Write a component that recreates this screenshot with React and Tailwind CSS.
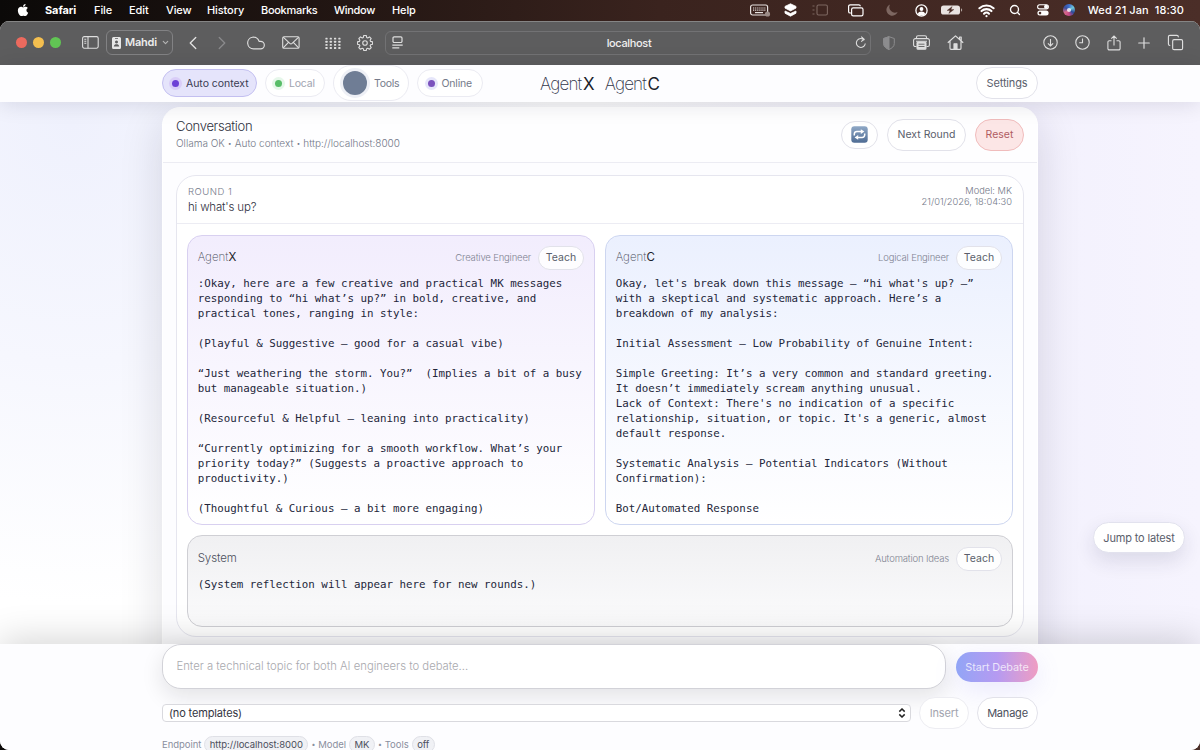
import React, { useState } from "react";
import { FaApple } from "react-icons/fa";
import {
  ChevronDown,
  ChevronLeft,
  ChevronRight,
  Cloud,
  Copy,
  Plus,
  Search,
  Wifi,
} from "lucide-react";

const agentXText = `:Okay, here are a few creative and practical MK messages
responding to “hi what’s up?” in bold, creative, and
practical tones, ranging in style:

(Playful & Suggestive – good for a casual vibe)

“Just weathering the storm. You?”  (Implies a bit of a busy
but manageable situation.)

(Resourceful & Helpful – leaning into practicality)

“Currently optimizing for a smooth workflow. What’s your
priority today?” (Suggests a proactive approach to
productivity.)

(Thoughtful & Curious – a bit more engaging)`;

const agentCText = `Okay, let's break down this message – “hi what's up? –”
with a skeptical and systematic approach. Here’s a
breakdown of my analysis:

Initial Assessment – Low Probability of Genuine Intent:

Simple Greeting: It’s a very common and standard greeting.
It doesn’t immediately scream anything unusual.
Lack of Context: There's no indication of a specific
relationship, situation, or topic. It's a generic, almost
default response.

Systematic Analysis – Potential Indicators (Without
Confirmation):

Bot/Automated Response`;

const MenuBar = () => (
  <div className="flex h-[21px] shrink-0 items-center pb-px text-[11px] font-medium tracking-[-0.1px] text-white">
    <FaApple className="ml-[16px] h-[14px] w-[14px]" />
    <span className="ml-[15px] w-[49px] font-bold">Safari</span>
    <span className="w-[35px]">File</span>
    <span className="w-[37px]">Edit</span>
    <span className="w-[41px]">View</span>
    <span className="w-[54px]">History</span>
    <span className="w-[73px] tracking-[-0.3px]">Bookmarks</span>
    <span className="w-[58px] tracking-[-0.3px]">Window</span>
    <span>Help</span>
    <div className="ml-auto flex items-center pr-4">
      {/* keyboard */}
      <svg className="h-[14px] w-[21px]" viewBox="0 0 21 14" fill="none" stroke="#e8e2e0">
        <rect x="0.6" y="2" width="17" height="10" rx="2" strokeWidth="1.2" />
        <path d="M3 5h13M3 7.2h13" strokeWidth="1.2" strokeDasharray="1.2 0.9" />
        <path d="M5 9.6h8" strokeWidth="1.2" />
        <circle cx="17.5" cy="11" r="2.6" fill="#9b8b86" stroke="none" />
      </svg>
      {/* stacked layers */}
      <svg className="ml-[13px] h-[14px] w-[13px]" viewBox="0 0 13 14" fill="#fff" stroke="#fff" strokeWidth="0.8" strokeLinejoin="round">
        <path d="M6.5 0.8 12 3.4v1.7L6.5 7.9 1 5.1V3.4z" />
        <path d="M1 8 6.5 10.5 12 8v2.2L6.5 13.2 1 10.2z" />
      </svg>
      <svg className="ml-[15px] h-[12px] w-[16px]" viewBox="0 0 16 12" fill="none" stroke="#7d6761" strokeWidth="1.1">
        <rect x="5" y="1" width="10.4" height="10" rx="1.5" />
        <path d="M0.5 2h2M0.5 6h2M0.5 10h2" />
      </svg>
      <svg className="ml-[20px] h-[13px] w-[16px]" viewBox="0 0 16 13" fill="none" stroke="#fff" strokeWidth="1.2">
        <path d="M3 9H2.2A1.6 1.6 0 0 1 .6 7.4V2.4A1.6 1.6 0 0 1 2.2.8h8.6a1.6 1.6 0 0 1 1.6 1.4" />
        <rect x="3.6" y="3.8" width="11.4" height="8" rx="1.6" />
      </svg>
      <svg className="ml-[22px] h-[12px] w-[12px]" viewBox="0 0 12 12" fill="#7d6761">
        <path d="M4 0.5A5.8 5.8 0 1 0 11.6 8 5.6 5.6 0 0 1 4 .5z" />
      </svg>
      <svg className="ml-[17px] h-[13px] w-[13px]" viewBox="0 0 13 13" fill="none" stroke="#fff" strokeWidth="1.3">
        <circle cx="6.5" cy="6.5" r="5.6" />
        <circle cx="6.5" cy="5" r="1.9" fill="#fff" stroke="none" />
        <path d="M2.8 10c.6-2 2-2.6 3.7-2.6s3.1.6 3.7 2.6c-2 2-5.4 2-7.4 0z" fill="#fff" stroke="none" />
      </svg>
      <svg className="ml-[13px] h-[10px] w-[22px]" viewBox="0 0 22 10">
        <rect x="0" y="0.5" width="19" height="9" rx="2.6" fill="#e9e3e1" />
        <path d="M20 3.3c1.6.4 1.6 3 0 3.4z" fill="#b5a8a4" />
        <path d="M11.2 1.4 6 5.5h3L7.8 8.6 13 4.5h-3z" fill="#4a2d27" stroke="#4a2d27" strokeWidth=".3" />
      </svg>
      <Wifi className="ml-[15px] h-[17px] w-[17px]" strokeWidth={3} />
      <Search className="ml-[14px] h-[12px] w-[12px]" strokeWidth={2.6} />
      <svg className="ml-[16px] h-[12px] w-[12px]" viewBox="0 0 12 12" fill="none" stroke="#fff">
        <rect x="0.6" y="0.7" width="10.8" height="4.2" rx="2.1" strokeWidth="1.1" />
        <circle cx="9" cy="2.8" r="2" fill="#fff" stroke="none" />
        <rect x="0.4" y="6.6" width="11.2" height="5" rx="2.5" fill="#fff" stroke="none" />
        <circle cx="3" cy="9.1" r="1.3" fill="#4a2d27" stroke="none" />
      </svg>
      <div className="ml-[14px] h-[12px] w-[12px] rounded-full bg-[conic-gradient(from_0deg,#3b6fd0,#6fc7d8,#2a4a9a,#c84a86,#d66a8a,#3a4f9c,#3b6fd0)]">
        <div className="mx-auto h-full w-full scale-[0.35] rounded-full bg-white/80" />
      </div>
      <span className="ml-[13px] tracking-[0.08px] whitespace-pre">Wed 21 Jan  18:30</span>
    </div>
  </div>
);

const SafariToolbar = () => (
  <div className="flex h-[44px] shrink-0 items-center border-t border-[#858585] bg-[#5d5d5e] pb-[2px] text-[#dedede]">
    <div className="ml-[16px] flex gap-[6px]">
      <span className="h-[11px] w-[11px] rounded-full bg-[#ec6a5e]" />
      <span className="h-[11px] w-[11px] rounded-full bg-[#f4bf4f]" />
      <span className="h-[11px] w-[11px] rounded-full bg-[#61c554]" />
    </div>
    {/* sidebar toggle */}
    <svg className="ml-[21px] h-[13px] w-[17px]" viewBox="0 0 17 13" fill="none" stroke="#dedede" strokeWidth="1.1">
      <rect x="0.6" y="0.6" width="15.6" height="11.6" rx="1.6" />
      <path d="M6 .6v11.6M2.3 3.2h2M2.3 5.2h2M2.3 7.2h2" />
    </svg>
    <div className="ml-[7px] flex h-[25px] w-[67px] items-center rounded-[6px] border border-[#828284] pl-[5px] text-[11px] font-semibold">
      <svg className="h-[12px] w-[9px]" viewBox="0 0 9 12" fill="#e6e6e6">
        <path
          fillRule="evenodd"
          d="M1.5 0h6A1.5 1.5 0 0 1 9 1.5v9A1.5 1.5 0 0 1 7.5 12h-6A1.5 1.5 0 0 1 0 10.5v-9A1.5 1.5 0 0 1 1.5 0zM3 1.2v.8h3v-.8zM4.5 3.6a1.5 1.5 0 1 0 .01 0zM1.8 9.6h5.4C7 7.8 6 7.2 4.5 7.2S2 7.8 1.8 9.6z"
        />
      </svg>
      <span className="ml-[4px] tracking-[-0.2px] text-[#ececec]">Mahdi</span>
      <ChevronDown className="ml-[4px] h-[9px] w-[9px] text-[#b5b5b5]" strokeWidth={3} />
    </div>
    <ChevronLeft className="ml-[9px] h-[22px] w-[22px]" strokeWidth={1.5} />
    <ChevronRight className="ml-[7px] h-[22px] w-[22px] text-[#88888a]" strokeWidth={1.5} />
    <Cloud className="ml-[13px] h-[20px] w-[20px]" strokeWidth={1.4} />
    {/* mail */}
    <svg className="ml-[16px] h-[13px] w-[18px]" viewBox="0 0 18 13" fill="none" stroke="#dedede" strokeWidth="1.1">
      <rect x="0.7" y="0.7" width="16.4" height="11.6" rx="1.4" />
      <path d="m1.2 1.2 6.6 6.2c.7.6 1.6.6 2.3 0l6.6-6.2M1.2 11.8l5-5.2M16.6 11.8l-5-5.2" />
    </svg>
    {/* start page dots */}
    <svg className="ml-[25px] h-[12px] w-[16px]" viewBox="0 0 16 12" fill="#dedede">
      {[0.7, 3.8, 6.9, 10].map((y) =>
        [0.4, 4.7, 9, 13.3].map((x) => (
          <rect key={`${x}-${y}`} x={x} y={y} width="2.2" height="1.9" rx="0.5" />
        ))
      )}
    </svg>
    {/* gear */}
    <svg className="ml-[16px] h-[16px] w-[16px]" viewBox="0 0 24 24" fill="none" stroke="#dedede" strokeWidth="1.7">
      <path
        d="M10.2 1.5h3.6l.7 3 1.6.7 2.7-1.6 2.5 2.5-1.6 2.7.7 1.6 3 .7v3.6l-3 .7-.7 1.6 1.6 2.7-2.5 2.5-2.7-1.6-1.6.7-.7 3h-3.6l-.7-3-1.6-.7-2.7 1.6-2.5-2.5 1.6-2.7-.7-1.6-3-.7v-3.6l3-.7.7-1.6-1.6-2.7 2.5-2.5 2.7 1.6 1.6-.7z"
        strokeLinejoin="round"
        transform="translate(0 -.8)"
      />
      <circle cx="12" cy="12" r="3.4" />
    </svg>
    <div className="ml-[12px] flex h-[24px] w-[486px] items-center rounded-[6px] border border-[#727274] pr-[3px] pl-[6px]">
      <svg className="h-[13px] w-[11px]" viewBox="0 0 11 13" fill="none" stroke="#dedede" strokeWidth="1.2">
        <rect x="1" y="0.9" width="9" height="5.6" rx="1.2" />
        <path d="M0.3 9.2h10.4M0.3 11.8h7" />
      </svg>
      <span className="flex-1 pt-px text-center text-[11px] font-medium tracking-[-0.35px] text-[#f0f0f0]">
        localhost
      </span>
      <svg className="h-[13px] w-[12px]" viewBox="0 0 12 13" fill="none" stroke="#dedede" strokeWidth="1.1">
        <path d="M9.4 4.2A4.5 4.5 0 1 0 10.3 7.5M6.2 0.6l2.9 2.6-2.9 2.4" />
      </svg>
    </div>
    <svg className="ml-[12px] h-[14px] w-[12px]" viewBox="0 0 12 14" fill="none" stroke="#8c8c8e" strokeWidth="1">
      <path d="M6 .7 11.3 2.5v5c0 3-2.5 4.8-5.3 6C3.2 12.3.7 10.5.7 7.5v-5z" />
      <path d="M6 .7v12.8C3.2 12.3.7 10.5.7 7.5v-5z" fill="#8c8c8e" />
    </svg>
    {/* printer */}
    <svg className="ml-[18px] h-[15px] w-[17px]" viewBox="0 0 17 15" fill="none" stroke="#dedede" strokeWidth="1.1">
      <path d="M3.5 3.6V2.2A1.5 1.5 0 0 1 5 .7h7a1.5 1.5 0 0 1 1.5 1.5v1.4M3.5 11.5H2.2A1.6 1.6 0 0 1 .6 9.9V5.3a1.7 1.7 0 0 1 1.7-1.7h12.4a1.7 1.7 0 0 1 1.7 1.7v4.6a1.6 1.6 0 0 1-1.6 1.6h-1.3" />
      <path d="M3 6.2h11" />
      <rect x="4" y="7" width="9" height="7.2" rx="1" fill="#dedede" />
      <path d="M5.5 9.2h6M5.5 11.5h6" stroke="#5d5d5e" strokeWidth=".9" />
    </svg>
    {/* home */}
    <svg className="ml-[17px] h-[15px] w-[17px]" viewBox="0 0 17 15" fill="none" stroke="#dedede" strokeWidth="1.2" strokeLinejoin="round">
      <path d="M0.8 7.7 8.5.9l7.7 6.8M3 6.2v7.1a1 1 0 0 0 1 1h9a1 1 0 0 0 1-1V6.2M12.6 4V2h1.6v3.4" />
      <rect x="7" y="8.8" width="3" height="5.4" fill="#dedede" />
    </svg>
    <svg className="ml-[79px] h-[15px] w-[15px]" viewBox="0 0 15 15" fill="none" stroke="#dedede" strokeWidth="1.1">
      <circle cx="7.5" cy="7.5" r="6.7" />
      <path d="M7.5 4v6.8M4.9 8.3l2.6 2.6 2.6-2.6" />
    </svg>
    <svg className="ml-[17px] h-[15px] w-[15px]" viewBox="0 0 15 15" fill="none" stroke="#dedede" strokeWidth="1.1">
      <circle cx="7.5" cy="7.5" r="6.7" />
      <path d="M7.5 3.5v4.3H4.2" />
    </svg>
    {/* share */}
    <svg className="ml-[17px] h-[16px] w-[14px]" viewBox="0 0 14 16" fill="none" stroke="#dedede" strokeWidth="1.1">
      <path d="M4.5 5.7H2.3A1.4 1.4 0 0 0 .9 7.1v6.4a1.4 1.4 0 0 0 1.4 1.4h9.4a1.4 1.4 0 0 0 1.4-1.4V7.1a1.4 1.4 0 0 0-1.4-1.4H9.5M7 10.5V1.2M4.3 3.7 7 1l2.7 2.7" />
    </svg>
    <Plus className="ml-[14px] h-[18px] w-[18px]" strokeWidth={1.6} />
    <Copy className="ml-[14px] h-[17px] w-[17px]" strokeWidth={1.6} />
  </div>
);

const AgentName = ({ letter, className = "" }) => (
  <span className="font-extralight">
    Agent<span className={`font-normal text-[#1c1f2b] ${className}`}>{letter}</span>
  </span>
);

const Dot = () => <span className="relative -top-px mx-[3px] text-[7px]">•</span>;

const TeachButton = () => (
  <button className="h-[24px] w-[46px] rounded-full border border-[#e2e2ea] bg-white/90 pt-px text-[10.5px] text-[#5a5e6b]">
    Teach
  </button>
);

const AgentCard = ({ title, role, text, className }) => (
  <div className={`rounded-[15px] border pt-[9px] pr-[10px] pl-[9.7px] ${className}`}>
    <div className="flex h-[25px] items-center">
      <span className="pt-px text-[11.5px] text-[#4b4f5c]">{title}</span>
      <span className="mr-[7px] ml-auto pt-px text-[9.5px] font-light tracking-[-0.17px] text-[#7f8392]">{role}</span>
      <TeachButton />
    </div>
    <pre className="mt-[6px] font-['DejaVu_Sans_Mono',monospace] text-[10.82px] leading-[15px] text-[#23263a]">
      {text}
    </pre>
  </div>
);

const Chip = ({ children }) => (
  <span className="mx-[3px] rounded-full border border-[#dfe0e6] bg-[#f0f1f5] px-[4.5px] py-px text-[#4b4f5c]">
    {children}
  </span>
);

const App = () => {
  const [topic, setTopic] = useState("");

  return (
    <div className="flex h-[750px] w-[1200px] flex-col overflow-hidden bg-linear-to-r from-[#0b0908] via-[#3a231e] via-55% to-[#4b2e28] font-['Inter',sans-serif]">
      <MenuBar />
      <div className="relative flex flex-1 flex-col overflow-hidden rounded-[9px] bg-white">
        <SafariToolbar />

        {/* app top bar */}
        <header className="relative z-10 flex h-[37px] shrink-0 justify-center bg-[#fdfdff] shadow-[0_2px_22px_rgba(15,15,40,0.12)]">
          <div className="flex h-[36px] w-[876px] items-center text-[10.5px] text-[#757a8a]">
            <div className="flex h-[28px] w-[95px] items-center rounded-full border border-[#c3bff0] bg-[#e5e4fb] pt-px pl-[9px] tracking-[-0.05px] text-[#3a3b52]">
              <span className="mr-[7px] mb-px h-[7px] w-[7px] rounded-full bg-[#6d3fd6] shadow-[0_0_0_3px_#d9cdf8]" />
              Auto context
            </div>
            <div className="ml-[8px] flex h-[28px] w-[60px] items-center rounded-full border border-[#ebebf2] bg-white pt-px pl-[9px] tracking-[-0.2px] text-[#a0a4b0]">
              <span className="mr-[7px] mb-px h-[7px] w-[7px] rounded-full bg-[#58bd68] shadow-[0_0_0_3px_#e6f7ea]" />
              Local
            </div>
            <div className="ml-[8px] flex h-[36px] w-[76px] items-center rounded-full border border-[#ebebf2] bg-white pt-px pl-[9px] tracking-[-0.3px]">
              <span className="mr-[7px] mb-px h-[24px] w-[24px] rounded-full bg-[#6f7d95] shadow-[0_0_0_3px_#eef0f6]" />
              Tools
            </div>
            <div className="ml-[8px] flex h-[28px] w-[66px] items-center rounded-full border border-[#ebebf2] bg-white pt-px pl-[10px] tracking-[-0.2px]">
              <span className="mr-[6.5px] mb-px h-[7px] w-[7px] rounded-full bg-[#7b52bd] shadow-[0_0_0_3px_#e6e6fa]" />
              Online
            </div>
            <div className="ml-[57px] flex gap-[11px] pt-[3px] text-[17px] tracking-[-0.8px] text-[#33364a]">
              <AgentName letter="X" className="ml-[1.5px]" />
              <AgentName letter="C" className="ml-[1.5px]" />
            </div>
            <button className="ml-auto h-[32px] w-[62px] rounded-full border border-[#e2e2ea] bg-white pt-px text-[11px] tracking-[-0.15px] text-[#5a5e6b]">
              Settings
            </button>
          </div>
        </header>

        <main className="flex h-[542px] shrink-0 justify-center overflow-hidden bg-[radial-gradient(ellipse_480px_480px_at_6%_4%,#eff1fd_0%,#f6f7fe_50%,transparent_100%),linear-gradient(90deg,#ffffff_50%,#f3f1fd_86%,#f6f4fe_100%)] pt-[5px]">
          <div className="h-[600px] w-[876px] shrink-0 rounded-[18px] border border-white bg-[#fdfdff] shadow-[0_12px_44px_rgba(20,20,50,0.14)]">
            <div className="flex h-[55px] items-center rounded-t-[17px] border-b border-[#ececf3] bg-white/60 px-[13px]">
              <div className="pt-px">
                <h1 className="text-[13px] leading-[17px] font-light tracking-[-0.3px] text-[#2e3140]">Conversation</h1>
                <p className="text-[10px] leading-[16px] font-light text-[#737888]">
                  Ollama OK
                  <Dot />
                  Auto context
                  <Dot />
                  http://localhost:8000
                </p>
              </div>
              <div className="ml-auto flex items-center gap-[9px] text-[10.5px] text-[#5a5e6b]">
                <button className="flex h-[28px] w-[37px] items-center justify-center rounded-full border border-[#e2e2ea] bg-white pb-px">
                  <svg className="h-[17px] w-[17px]" viewBox="0 0 17 17" fill="none">
                    <defs>
                      <linearGradient id="repeat" x1="0" y1="0" x2="0" y2="1">
                        <stop offset="0" stopColor="#8fa8c6" />
                        <stop offset="1" stopColor="#4f6c94" />
                      </linearGradient>
                    </defs>
                    <rect x="0.3" y="0.3" width="16.4" height="16.4" rx="3" fill="url(#repeat)" />
                    <g stroke="#fff" strokeWidth="1.5">
                      <path d="M3.3 9.6V8a2.6 2.6 0 0 1 2.6-2.4h4.6" />
                      <path d="M13.7 7.4V9a2.6 2.6 0 0 1-2.6 2.4H6.5" />
                    </g>
                    <path d="M9.8 3.3 13.4 5.6 9.8 7.9zM7.2 9.1 3.6 11.4 7.2 13.7z" fill="#fff" />
                  </svg>
                </button>
                <button className="h-[32px] w-[79px] rounded-full border border-[#e2e2ea] bg-white">Next Round</button>
                <button className="h-[32px] w-[49px] rounded-full border border-[#f0bcbc] bg-[#fce6e6] text-[#b05c62]">
                  Reset
                </button>
              </div>
            </div>

            <div className="px-[13px] pt-[12px]">
              <section className="h-[462px] rounded-[20px] border border-[#e6e6ef] bg-white">
                <div className="flex h-[48px] justify-between border-b border-[#ececf3] px-[11px] pt-[9px]">
                  <div>
                    <p className="text-[9.5px] leading-[14px] font-light tracking-[0.5px] text-[#737888]">ROUND 1</p>
                    <p className="text-[11.5px] leading-[17px] font-light tracking-[-0.18px] text-[#2e3140]">hi what's up?</p>
                  </div>
                  <div className="text-right text-[9.3px] leading-[11px] font-light text-[#737888]">
                    <p>Model: MK</p>
                    <p>21/01/2026, 18:04:30</p>
                  </div>
                </div>
                <div className="grid grid-cols-2 gap-[10px] p-[10px] pt-[11px]">
                  <AgentCard
                    title={<AgentName letter="X" />}
                    role="Creative Engineer"
                    text={agentXText}
                    className="h-[290px] border-[#d8d0f0] bg-linear-to-b from-[#f2edfd] to-white"
                  />
                  <AgentCard
                    title={<AgentName letter="C" />}
                    role="Logical Engineer"
                    text={agentCText}
                    className="h-[290px] border-[#cdd6f0] bg-linear-to-b from-[#ebf0fe] to-white"
                  />
                  <AgentCard
                    title={<span className="font-light tracking-[-0.1px]">System</span>}
                    role="Automation Ideas"
                    text="(System reflection will appear here for new rounds.)"
                    className="col-span-2 h-[92px] border-[#cfcfd4] bg-linear-to-b from-[#f0f0f2] to-[#fbfbfc] pt-[10px]"
                  />
                </div>
              </section>
            </div>
          </div>
        </main>

        {/* composer */}
        <footer className="relative z-10 flex h-[106px] shrink-0 justify-center bg-[#fdfdff] shadow-[0_-4px_36px_rgba(0,0,0,0.17)]">
          <div className="flex w-[876px] flex-col">
            <div className="flex items-center">
              <input
                className="h-[45px] w-[784px] rounded-[19px] border border-[#d2d2d8] bg-white pb-[2px] pl-[13.5px] text-[11.3px] font-light text-[#2e3140] shadow-[0_8px_22px_rgba(15,15,30,0.11)] outline-none placeholder:text-[#a9a9ae]"
                placeholder="Enter a technical topic for both AI engineers to debate..."
                value={topic}
                onChange={(e) => setTopic(e.target.value)}
              />
              <button className="ml-[10px] h-[30px] w-[82px] rounded-full bg-linear-to-r from-[#91a5f6] via-[#b59af1] to-[#ef9cc2] pt-[2px] text-[10.9px] tracking-[-0.1px] text-white/75 shadow-[0_8px_26px_rgba(120,110,240,0.14)]">
                Start Debate
              </button>
            </div>
            <div className="mt-[8px] flex items-center">
              <div className="flex h-[18px] w-[749px] items-center justify-between rounded-[4px] border border-[#d9d9de] bg-white pr-[4px] pl-[6px] text-[11px] tracking-[-0.15px] text-[#33353f]">
                (no templates)
                <svg className="h-[10px] w-[8px]" viewBox="0 0 8 10" fill="none" stroke="#222" strokeWidth="1.5">
                  <path d="M1.3 3.6 4 1l2.7 2.6M1.3 6.4 4 9l2.7-2.6" />
                </svg>
              </div>
              <button className="ml-[8px] h-[32px] w-[50px] rounded-full border border-[#ededf2] bg-white pt-px text-[11px] tracking-[-0.15px] text-[#a2a4ae]">
                Insert
              </button>
              <button className="ml-[8px] h-[32px] w-[61px] rounded-full border border-[#e2e2ea] bg-white pt-px text-[11px] tracking-[-0.2px] text-[#4b4f5c]">
                Manage
              </button>
            </div>
            <div className="mt-[7px] flex items-center text-[9.5px] leading-[13px] tracking-[-0.05px] text-[#8a8f9e]">
              Endpoint <Chip>http://localhost:8000</Chip>
              <span className="-ml-[3px]">
                <Dot />
              </span>
              Model <Chip>MK</Chip>
              <span className="-ml-[3px]">
                <Dot />
              </span>
              Tools <Chip>off</Chip>
            </div>
          </div>
        </footer>

        <button className="absolute top-[501px] right-[15px] z-20 h-[31px] w-[92px] rounded-full border border-[#e2e2ee] bg-white pt-px text-[11px] tracking-[-0.15px] text-[#5a5e6b] shadow-[0_8px_20px_rgba(30,30,70,0.12)]">
          Jump to latest
        </button>
      </div>
    </div>
  );
};

export default App;
